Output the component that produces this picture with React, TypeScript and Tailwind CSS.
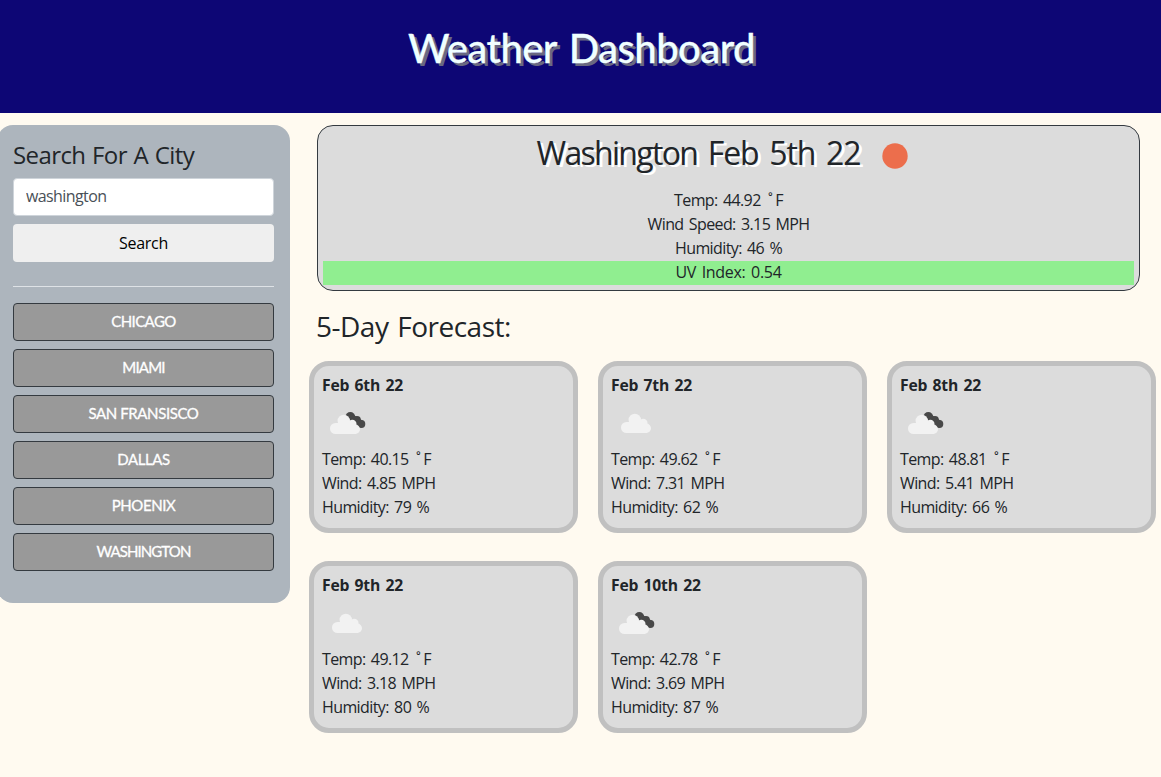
import React from "react";

type Day = { date: string; icon: "cloud" | "broken"; temp: string; wind: string; humidity: string };

const days: Day[] = [
  { date: "Feb 6th 22", icon: "broken", temp: "40.15", wind: "4.85", humidity: "79" },
  { date: "Feb 7th 22", icon: "cloud", temp: "49.62", wind: "7.31", humidity: "62" },
  { date: "Feb 8th 22", icon: "broken", temp: "48.81", wind: "5.41", humidity: "66" },
  { date: "Feb 9th 22", icon: "cloud", temp: "49.12", wind: "3.18", humidity: "80" },
  { date: "Feb 10th 22", icon: "broken", temp: "42.78", wind: "3.69", humidity: "87" },
];

const cities = [
  { name: "CHICAGO", tracking: "tracking-[-0.6px]" },
  { name: "MIAMI", tracking: "tracking-[-0.8px]" },
  { name: "SAN FRANSISCO", tracking: "tracking-[-0.4px]" },
  { name: "DALLAS", tracking: "tracking-[-0.4px]" },
  { name: "PHOENIX", tracking: "tracking-[-0.4px]" },
  { name: "WASHINGTON", tracking: "tracking-[-0.9px]" },
];

function CloudShape() {
  return (
    <>
      <circle cx="13.5" cy="30.5" r="5.5" />
      <circle cx="21.8" cy="23" r="6.2" />
      <circle cx="30.3" cy="26" r="4.2" />
      <circle cx="33.3" cy="31.3" r="4.7" />
      <path d="M13.5 25h5L30 23l4 5v8H13.5Z" />
    </>
  );
}

function WeatherIcon({ kind }: { kind: Day["icon"] }) {
  return (
    <svg width="50" height="50" viewBox="0 0 50 50" className="block">
      {kind === "broken" ? (
        <>
          <g fill="#484848">
            <circle cx="28.3" cy="18.9" r="4.9" />
            <circle cx="35" cy="21.8" r="3.9" />
            <circle cx="39.3" cy="26" r="4" />
            <path d="M25 21 31 16.5 42 23.5 38 29.5Z" />
          </g>
          <g fill="#f2f2f2">
            <CloudShape />
          </g>
        </>
      ) : (
        <g fill="#f2f2f2" transform="translate(2 -1)">
          <CloudShape />
        </g>
      )}
    </svg>
  );
}

function Temperature({ value }: { value: string }) {
  return (
    <p className="pb-0.5 leading-[22px]">
      Temp: {value} <span className="pl-0.5 tracking-[2.5px]">˚</span>F
    </p>
  );
}

function ForecastCard({ day }: { day: Day }) {
  return (
    <article className="h-[172px] rounded-[20px] border-[5px] border-[#c0c0c0] bg-[#dcdcdc] px-2 pt-2 tracking-[-0.6px] [word-spacing:1.7px]">
      <h3 className="pb-0.5 text-[15.7px] leading-[22px] font-bold tracking-[-0.2px] [word-spacing:1.5px]">{day.date}</h3>
      <WeatherIcon kind={day.icon} />
      <Temperature value={day.temp} />
      <p className="pb-0.5 leading-[22px]">Wind: {day.wind} MPH</p>
      <p className="pb-0.5 leading-[22px]">Humidity: {day.humidity} %</p>
    </article>
  );
}

export default function App() {
  return (
    <div className="min-h-screen overflow-hidden bg-[#fffaf0] font-['Open_Sans',sans-serif] text-base leading-6 text-[#212529]">
      <header className="h-[113px] bg-[#0d0675] pt-6 text-center">
        <h1 className="pl-0.5 font-['Lato',sans-serif] text-[40px] leading-[48px] font-medium tracking-[-0.55px] text-[#f0ffff] [word-spacing:3px] [-webkit-text-stroke:0.3px_#f0ffff] [text-shadow:3px_3px_#696981]">
          Weather Dashboard
        </h1>
      </header>
      <div className="flex pt-3">
        <aside className="-ml-[3px] h-[478px] w-[293px] shrink-0 rounded-[16px] bg-[#adb5bd] pt-[15px] pr-4 pl-4">
          <h2 className="mb-[9px] text-2xl leading-[29px] tracking-[-0.6px] [word-spacing:1px]">Search For A City</h2>
          <input
            className="block h-[38px] w-full rounded border border-[#ced4da] bg-white px-3 pb-0.5 tracking-[-0.6px] text-[#495057] outline-none"
            defaultValue="washington"
          />
          <button className="mt-2 block h-[38px] w-full rounded bg-[#efefef] tracking-[-0.3px] text-black">Search</button>
          <hr className="mt-6 mb-4 border-t border-[#dee2e6]" />
          <div className="flex flex-col gap-2">
            {cities.map((c) => (
              <button
                key={c.name}
                className={`h-[38px] rounded border border-[#343a40] bg-[#999999] pb-0.5 font-['Lato',sans-serif] text-[15px] text-white [-webkit-text-stroke:0.3px_#ffffff] ${c.tracking}`}
              >
                {c.name}
              </button>
            ))}
          </div>
        </aside>
        <main className="ml-[19px] w-[847px] shrink-0">
          <section className="ml-2 h-[166px] w-[823px] rounded-[16px] border border-[#343a40] bg-[#dcdcdc] px-[5px] pt-[5px] text-center">
            <div className="flex h-[50px] items-start justify-center">
              <h2 className="text-[32px] leading-[43px] tracking-[-1.1px] [word-spacing:3.5px] [text-shadow:3px_2px_#ffffff]">
                <span className="tracking-[-1.7px]">Washington</span> Feb 5th 22
              </h2>
              <svg width="50" height="50" viewBox="0 0 50 50" className="ml-[10px]">
                <circle cx="25" cy="25" r="12.7" fill="#ec6e4c" />
              </svg>
            </div>
            <div className="pt-2 tracking-[-0.6px] [word-spacing:1.7px]">
              <Temperature value="44.92" />
              <p className="pb-0.5 leading-[22px]">Wind Speed: 3.15 MPH</p>
              <p className="pb-0.5 leading-[22px]">Humidity: 46 %</p>
              <p className="bg-[#90ee90] pb-0.5 leading-[22px] tracking-[-0.3px]">UV Index: 0.54</p>
            </div>
          </section>
          <h2 className="my-[18px] ml-[7px] text-[28px] leading-[34px] tracking-[-0.5px] [word-spacing:2px]">5-Day Forecast:</h2>
          <div className="grid grid-cols-3 gap-x-5 gap-y-7">
            {days.map((d) => (
              <ForecastCard key={d.date} day={d} />
            ))}
          </div>
        </main>
      </div>
    </div>
  );
}
